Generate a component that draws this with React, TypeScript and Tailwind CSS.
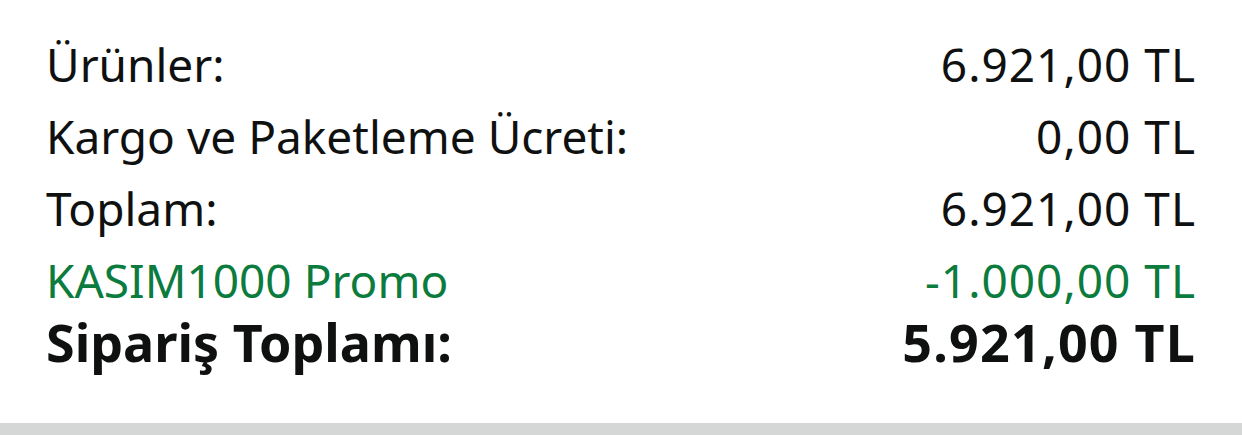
import React from 'react';

interface Line {
    label: string;
    value: string;
    tone?: 'promo';
}

const lines: Line[] = [
    { label: 'Ürünler:', value: '6.921,00 TL' },
    { label: 'Kargo ve Paketleme Ücreti:', value: '0,00 TL' },
    { label: 'Toplam:', value: '6.921,00 TL' },
    { label: 'KASIM1000 Promo', value: '-1.000,00 TL', tone: 'promo' },
];

export default function App() {
    return (
        <div className="w-[1242px] h-[435px] bg-white flex flex-col font-['Noto_Sans',sans-serif] text-[#0f1111]">
            <section className="flex-1 pt-[28px] pl-[46px] pr-[47px]">
                {lines.map((line) => (
                    <div
                        key={line.label}
                        className={`flex justify-between text-[46px] leading-[72px] ${line.tone === 'promo' ? 'text-[#0b7b3e]' : ''}`}
                    >
                        <span>{line.label}</span>
                        <span className="tracking-[1px] -mr-[1px]">{line.value}</span>
                    </div>
                ))}
                <div className="flex justify-between text-[52px] leading-[52px] font-bold">
                    <span>Sipariş Toplamı:</span>
                    <span className="tracking-[1.2px] -mr-[1px]">5.921,00 TL</span>
                </div>
            </section>
            <div className="h-[12px] bg-[#d5d6d6]" />
        </div>
    );
}
